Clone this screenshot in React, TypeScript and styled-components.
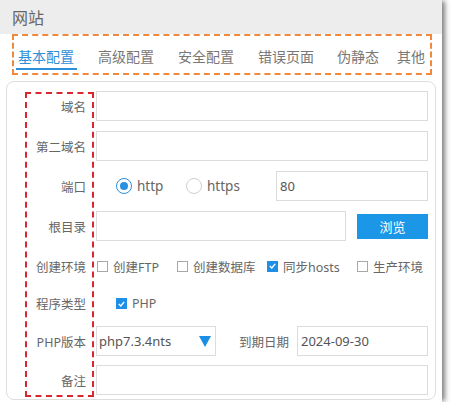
import React from "react";
import styled, { createGlobalStyle } from "styled-components";

const GlobalStyle = createGlobalStyle`
  html, body {
    margin: 0;
    padding: 0;
    background: #ffffff;
  }
  body {
    font-family: "Noto Sans", "Noto Sans CJK SC", sans-serif;
    color: #666;
  }
`;

const Panel = styled.div`
  width: 442px;
  height: 402px;
  background: #ffffff;
  box-shadow: 4px 0 5px -1px rgba(0, 0, 0, 0.5);
  box-sizing: border-box;
`;

const Header = styled.div`
  height: 34px;
  background: #ededed;
  display: flex;
  align-items: center;
  padding-left: 12px;
  font-size: 16px;
  color: #666;
`;

const TabBar = styled.div`
  margin: 0 10px 0 12px;
  height: 41px;
  box-sizing: border-box;
  border: 2px dashed #f0893b;
  display: flex;
  align-items: flex-end;
  padding: 0 0 3px 2px;
  overflow: hidden;
`;

const Tab = styled.div<{ $active?: boolean; $after: number }>`
  font-size: 14px;
  line-height: 20px;
  padding: 0 3px 1px 2px;
  margin-right: ${(p) => p.$after}px;
  white-space: nowrap;
  color: ${(p) => (p.$active ? "#2b90d9" : "#777")};
  border-bottom: 2px solid ${(p) => (p.$active ? "#2b90d9" : "transparent")};
`;

const Card = styled.div`
  margin: 6px 0 0 6px;
  width: 430px;
  height: 319px;
  box-sizing: border-box;
  border: 1px solid #dedede;
  border-radius: 8px;
  padding: 4px 7px 0 18px;
`;

const Form = styled.div`
  display: grid;
  grid-template-columns: 71px 332px;
  grid-template-rows: 40px 40px 40px 40px 40px 35px 40px 38px;
`;

const LabelFrame = styled.div`
  grid-column: 1;
  grid-row: 1 / -1;
  margin: 6px 2px 2px 0;
  border: 2px dashed #d9262f;
`;

const Label = styled.div<{ $row: number }>`
  grid-column: 1;
  grid-row: ${(p) => p.$row};
  display: flex;
  align-items: center;
  justify-content: flex-end;
  padding-right: 10px;
  font-size: 12.5px;
  color: #666;
  white-space: nowrap;
`;

const Field = styled.div<{ $row: number; $pad?: number }>`
  grid-column: 2;
  grid-row: ${(p) => p.$row};
  display: flex;
  align-items: center;
  padding-left: ${(p) => p.$pad ?? 0}px;
  font-size: 13px;
  color: #555;
`;

const Input = styled.div<{ $w?: number }>`
  box-sizing: border-box;
  height: 30px;
  width: ${(p) => (p.$w ? `${p.$w}px` : "100%")};
  border: 1px solid #dcdcdc;
  display: flex;
  align-items: center;
  padding-left: 3px;
  font-size: 13px;
  color: #555;
  flex-shrink: 0;
`;

const RadioItem = styled.div<{ $w: number }>`
  display: flex;
  align-items: center;
  gap: 5px;
  width: ${(p) => p.$w}px;
  font-size: 13.5px;
  color: #666;
`;

const RadioCircle = styled.span<{ $on?: boolean }>`
  width: 16px;
  height: 16px;
  box-sizing: border-box;
  border-radius: 50%;
  border: 1px solid ${(p) => (p.$on ? "#2a91e0" : "#cfcfcf")};
  display: flex;
  align-items: center;
  justify-content: center;
  &::after {
    content: "";
    width: 8px;
    height: 8px;
    border-radius: 50%;
    background: ${(p) => (p.$on ? "#2a91e0" : "transparent")};
  }
`;

const Button = styled.div`
  margin-left: 11px;
  width: 71px;
  height: 25px;
  background: #1c96e6;
  color: #fff;
  font-size: 13px;
  display: flex;
  align-items: center;
  justify-content: center;
`;

const CheckItem = styled.div<{ $w?: number }>`
  display: flex;
  align-items: center;
  gap: 5px;
  font-size: 12.5px;
  color: #666;
  width: ${(p) => (p.$w ? `${p.$w}px` : "auto")};
  white-space: nowrap;
  flex-shrink: 0;
`;

const Box = styled.span<{ $on?: boolean }>`
  width: 11px;
  height: 11px;
  box-sizing: border-box;
  border: 1px solid ${(p) => (p.$on ? "#1e8fe6" : "#a8a8a8")};
  background: ${(p) => (p.$on ? "#1e8fe6" : "#fff")};
  display: flex;
  align-items: center;
  justify-content: center;
  flex-shrink: 0;
`;

const Select = styled(Input)`
  justify-content: space-between;
  padding-right: 4px;
  padding-left: 2px;
`;

const Caret = styled.span`
  width: 0;
  height: 0;
  border-left: 6px solid transparent;
  border-right: 6px solid transparent;
  border-top: 11px solid #1a8fe3;
`;

const InlineLabel = styled.span`
  margin-left: 23px;
  font-size: 12.5px;
  color: #666;
  white-space: nowrap;
`;

function Check({ on, label, w }: { on?: boolean; label: string; w?: number }) {
  return (
    <CheckItem $w={w}>
      <Box $on={on}>
        {on && (
          <svg width="7" height="6" viewBox="0 0 7 6">
            <path d="M0.8 3 L2.8 5 L6.2 0.9" fill="none" stroke="#fff" strokeWidth="1.4" />
          </svg>
        )}
      </Box>
      {label}
    </CheckItem>
  );
}

const tabs: [string, number][] = [
  ["基本配置", 19],
  ["高级配置", 19],
  ["安全配置", 19],
  ["错误页面", 18],
  ["伪静态", 13],
  ["其他", 0],
];

export default function App() {
  return (
    <>
      <GlobalStyle />
      <Panel>
        <Header>网站</Header>
        <TabBar>
          {tabs.map(([t, after], i) => (
            <Tab key={t} $active={i === 0} $after={after}>
              {t}
            </Tab>
          ))}
        </TabBar>
        <Card>
          <Form>
            <LabelFrame />
            <Label $row={1}>域名</Label>
            <Field $row={1}>
              <Input />
            </Field>

            <Label $row={2}>第二域名</Label>
            <Field $row={2}>
              <Input />
            </Field>

            <Label $row={3}>端口</Label>
            <Field $row={3} $pad={20}>
              <RadioItem $w={70}>
                <RadioCircle $on />
                http
              </RadioItem>
              <RadioItem $w={70}>
                <RadioCircle />
                https
              </RadioItem>
              <Input $w={152} style={{ marginLeft: "auto" }}>80</Input>
            </Field>

            <Label $row={4}>根目录</Label>
            <Field $row={4}>
              <Input $w={250} />
              <Button>浏览</Button>
            </Field>

            <Label $row={5}>创建环境</Label>
            <Field $row={5} $pad={1}>
              <Check label="创建FTP" w={80} />
              <Check label="创建数据库" w={90} />
              <Check on label="同步hosts" w={90} />
              <Check label="生产环境" />
            </Field>

            <Label $row={6}>程序类型</Label>
            <Field $row={6} $pad={20}>
              <Check on label="PHP" />
            </Field>

            <Label $row={7}>PHP版本</Label>
            <Field $row={7}>
              <Select $w={120}>
                php7.3.4nts
                <Caret />
              </Select>
              <InlineLabel>到期日期</InlineLabel>
              <Input $w={131} style={{ marginLeft: "auto" }}>2024-09-30</Input>
            </Field>

            <Label $row={8}>备注</Label>
            <Field $row={8}>
              <Input />
            </Field>
          </Form>
        </Card>
      </Panel>
    </>
  );
}
